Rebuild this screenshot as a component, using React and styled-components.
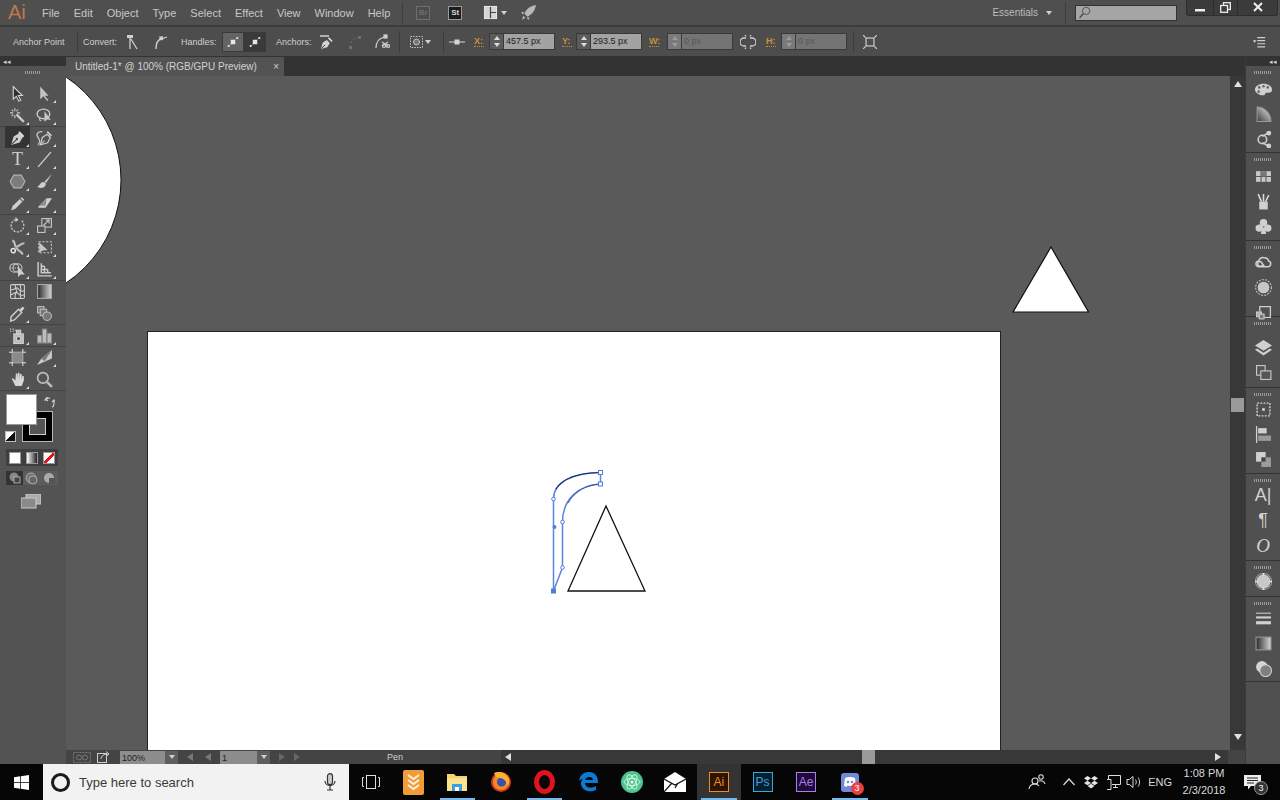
import React from "react";
import styled, { createGlobalStyle } from "styled-components";

const GlobalStyle = createGlobalStyle`
  html, body { margin: 0; padding: 0; background: #000; }
  * { box-sizing: border-box; }
`;

const L = "#c9c9c9";

const NIB = "M2 15l2.4-8 5-3 3.6 3.6-3 5z";

// tool and panel drawings, 16x16
const ICONS = {
  select: <path d="M4 1.5v11.8l2.9-2.7 2.4 4.6 1.8-.9-2.3-4.4h3.8z" fill="#303030" stroke="#d6d6d6" />,
  direct: <path d="M4 1.5v12l3-2.8 3.6 4.3 1-.8-3.4-4.2h3.6z" fill="#c4c4c4" />,
  wand: <g stroke={L} fill="none"><path d="M7 7l7 7" strokeWidth="2.2" /><path d="M5.5 1v3M5.5 7.5v3M1 5.5h3M7.5 5.5h3M2.500 2.500l1.6 1.6M8.500 2.500L7 4M2.500 8.500L4 7" /></g>,
  lasso: <g fill="none" stroke={L}><ellipse cx="7" cy="6.5" rx="6" ry="4.5" strokeWidth="1.3" /><path d="M4 10c-1 1-1 3 1 3" /><path d="M8 4v10l2.4-2.2 3.6.2z" fill="#c8c8c8" stroke="none" /></g>,
  pen: <g><path d={NIB} fill="#cfcfcf" /><path d="M10 2.2l4.4 4.4-1.3 1.3-4.4-4.4z" fill="#e0e0e0" /><path d="M2.5 14.5l4.3-4.3" stroke="#444" /><circle cx="7.4" cy="9.4" r="1.1" fill="#444" /></g>,
  curvature: <g fill="none" stroke={L}><path d="M4 15l2-7 4.500-3 3 3-2.500 5z" strokeWidth="1.2" /><path d="M10.500 2.500l4 4" strokeWidth="1.8" /><path d="M4.500 14.500L8 11" /><path d="M6 2.500C1 2 0 5.500 2 8s2 4 0 7" strokeWidth="1.2" /></g>,
  line: <path d="M2 15L14 1" stroke="#d0d0d0" strokeWidth="1.2" />,
  hexagon: <path d="M4.500 2h7L15 8l-3.500 6h-7L1 8z" fill="#7c7c7c" stroke="#b4b4b4" />,
  brush: <g><path d="M15 1L8 8l1.500 1.500z" fill={L} /><path d="M7.500 8.500C4 8 4 12 1 13c3 2 8 1 8.400-3z" fill="#cfcfcf" /></g>,
  pencil: <g><path d="M12 2l2.400 2.400L6 13l-4 1.500 1.400-4.100z" fill="#cfcfcf" /><path d="M10.500 3.500l2.400 2.400" stroke="#555" /></g>,
  eraser: <g><path d="M10 3h5l-6 9H2l1-2z" fill="#d0d0d0" /><path d="M10 3l-7 7h6z" fill="#8e8e8e" /></g>,
  rotate: <g fill="none" stroke={L}><path d="M12 3.600A6 6 0 1 1 6 2.400" strokeDasharray="2 1.2" strokeWidth="1.2" /><path d="M6 0v5l3-2.500z" fill={L} stroke="none" /></g>,
  scale: <g fill="none" stroke={L}><rect x="5.5" y="1.5" width="9" height="8" /><rect x="1.5" y="8.5" width="7" height="6" fill="#555" /><path d="M7 8l5-5M9 2.800h3.300v3.300" /></g>,
  puppet: <g fill="none" stroke="#bcbcbc" strokeWidth="2"><path d="M3 1.500C6 2 5 5 6 7c3 1.500 4-3 8.500-3" /><path d="M7 8c.5 3 4 2.500 6 6.500" /><circle cx="4" cy="11" r="2" fill="#535353" stroke="#e6e6e6" strokeWidth="1.3" /></g>,
  free: <g><rect x="2.5" y="2.5" width="12" height="10.5" fill="none" stroke={L} strokeDasharray="2 1.5" /><path d="M3 3v10l3-2 2-.5h3z" fill="#c4c4c4" /></g>,
  builder: <g fill="none" stroke={L}><ellipse cx="5" cy="6.500" rx="4.200" ry="4" /><path d="M1 6.500h8" strokeDasharray="1.2 1" /><ellipse cx="8" cy="6.500" rx="4.200" ry="4" /><path d="M8.500 5v10l2.500-2.400 3.800.2z" fill="#cfcfcf" stroke="none" /></g>,
  perspective: <g fill="none" stroke={L}><path d="M2 1v13h13" strokeWidth="1.4" /><path d="M5 2v9h9M8 5v6M11 8v3M5 5h3M5 8h6" strokeWidth="1.4" /></g>,
  mesh: <g fill="none" stroke="#cfcfcf"><rect x="1.5" y="1.5" width="13" height="13" rx="1" /><path d="M1.500 6c3 2 5-3 7-1s1 4 6 2M1.500 11c3 0 4-3 6-2s2 4 7 2M6 1.500c-1 3 2 5 1 7s-2 3-1 6M11 1.500c-1 3 1 4 0 6s0 5 0 7" /></g>,
  gradient: <rect x="1.5" y="1.5" width="13" height="13" fill="url(#toolGrad)" stroke="#aaa" />,
  eyedropper: <g><path d="M13 1.500L14.500 3 12 6l-2-2z" fill="#d0d0d0" /><path d="M9 4l3 3-7 7-3.500 1L2 11z" fill="none" stroke="#cfcfcf" strokeWidth="1.3" /></g>,
  blend: <g fill="#777" stroke="#bdbdbd"><rect x="1.5" y="1.5" width="6" height="6" /><rect x="4" y="4" width="6" height="6" /><circle cx="10.5" cy="10.5" r="4" /></g>,
  spray: <g fill="none" stroke="#cfcfcf"><rect x="4.5" y="6.5" width="9" height="9" fill="#bbb" /><circle cx="9" cy="11" r="2" fill="#555" /><rect x="7" y="3" width="4" height="3.5" fill="#bbb" /><path d="M1 2h1M3.500 2h1M1 4h1M3.500 4h1M5.500 3h1" /></g>,
  graph: <g fill="#bcbcbc" stroke="#8a8a8a"><rect x="1.5" y="8" width="4" height="7" /><rect x="6" y="2" width="4" height="13" /><rect x="10.5" y="6" width="4" height="9" /></g>,
  artboard: <g><rect x="3" y="3" width="10" height="10" fill="#8a8a8a" stroke="#aaa" /><path d="M3 0v3H0M13 0v3h3M3 16v-3H0M13 16v-3h3" fill="none" stroke="#ddd" /></g>,
  slice: <g><path d="M15 1L5 9l-4 6 14-6z" fill="#c8c8c8" /><path d="M15 1L5 9l3 2.500z" fill="#7a7a7a" /></g>,
  hand: <path d="M3 8l3 6h6l2-5V5l-1.500-.5L12 8V3l-1.500-.5L10 7.500V2l-1.500-.5L8 7.500v-5L6.500 2 6 9 3.800 6.800 2.500 7z" fill="#d6d6d6" />,
  zoom: <g fill="none" stroke="#bdbdbd"><circle cx="6.5" cy="6.5" r="5" strokeWidth="1.6" /><path d="M10.500 10.500L15 15" strokeWidth="2.4" /></g>,
  // control bar
  convertA: <g fill="none" stroke="#cfcfcf"><path d="M5 2v13M6 5l6 10" strokeWidth="1.3" /><rect x="2" y="1" width="6" height="3" fill="#cfcfcf" stroke="none" /></g>,
  convertB: <g fill="none" stroke="#cfcfcf" strokeWidth="1.3"><path d="M3 15c0-6 1-9 5-10" /><path d="M8 5l6-2" /><rect x="7" y="3" width="2.5" height="2.5" fill="#ccc" /></g>,
  handles: <g><path d="M2 14L14 2" stroke="#ddd" strokeDasharray="2 1.4" /><rect x="5" y="5" width="6" height="6" fill="#e6e6e6" /><rect x="1" y="12" width="2.5" height="2.5" fill="#ddd" /><rect x="12.5" y="1.5" width="2.5" height="2.5" fill="#ddd" /></g>,
  addAnchor: <g><path d="M2 15l1.800-6.500 4-2.500 3 3-2.500 4.300z" fill="#d2d2d2" /><path d="M9 4.500L12.500 8l1-1.200L10 3.300z" fill="#e0e0e0" /><path d="M1 2h9" stroke="#ddd" strokeWidth="1.4" /><path d="M2.500 14.500L6 11" stroke="#444" /></g>,
  removeAnchor: <g fill="#707070"><rect x="2" y="12" width="3" height="3" /><rect x="11" y="2" width="3" height="3" /><path d="M4 9c.5-3 2-4 5-5" fill="none" stroke="#707070" strokeDasharray="1.5 1.5" /></g>,
  cutPath: <g fill="none" stroke="#cfcfcf" strokeWidth="1.2"><path d="M2 14c0-6 3-10 9-11" /><rect x="10" y="1" width="3" height="3" fill="#ccc" /><circle cx="10" cy="12" r="1.5" /><circle cx="14" cy="12" r="1.5" /><path d="M8 8l6 4M14 8l-6 4" /></g>,
  isolate: <g fill="none" stroke="#c4c4c4"><rect x="1.5" y="2.5" width="12" height="11" strokeDasharray="1.5 1.2" /><circle cx="7.5" cy="8" r="3" fill="#777" /></g>,
  refPoint: <g stroke="#d4d4d4"><path d="M0 8h16" /><rect x="6" y="6" width="4" height="4" fill="#d4d4d4" /></g>,
  link: <g fill="none" stroke="#d0d0d0" strokeWidth="1.3"><path d="M6 4H4a4 4 0 0 0 0 8h2M10 4h2a4 4 0 0 1 0 8h-2" /><path d="M5 1l1 1.500M11 1l-1 1.500M5 15l1-1.500M11 15l-1-1.500" /></g>,
  transformBox: <g fill="none" stroke="#d4d4d4"><rect x="3.5" y="3.5" width="9" height="9" strokeWidth="1.3" /><path d="M0 0l3 3M16 0l-3 3M0 16l3-3M16 16l-3-3" strokeWidth="1.3" /></g>,
  panelMenu: <g stroke="#cfcfcf"><path d="M6 3h9M6 6.500h9M6 10h9M6 13.500h9" strokeWidth="1.3" /><path d="M1 6h4L3 9z" fill="#cfcfcf" stroke="none" /></g>,
  arrange: <g><rect x="1.5" y="1.5" width="13" height="13" fill="#d6d6d6" stroke="#ededed" /><path d="M8 2v12M8 8h6" stroke="#444" strokeWidth="1.3" /></g>,
  rocket: <g fill="#b8b8b8"><path d="M15 1C9 2 6 5 4 9l3 3c4-2 7-5 8-11z" /><path d="M3.500 7L1 8l2 2zM9 12.500L8 15l-2-2zM3 11l2 2-3 2z" /></g>,
  search: <g fill="none" stroke="#444"><circle cx="10" cy="6" r="4.5" /><path d="M6.500 9.500L2 14.500" strokeWidth="1.5" /></g>,
  // dock
  palette: <g><path d="M8 2.500c-4.500 0-8 2.300-8 5.500 0 3 3.500 5.500 8 5.500 2 0 1-2.500 3-2.500s5 .5 5-3c0-3.200-3.500-5.500-8-5.500z" fill="#cfcfcf" /><circle cx="4" cy="6" r="1.2" fill="#666" /><circle cx="8" cy="5" r="1.2" fill="#666" /><circle cx="12" cy="6" r="1.2" fill="#666" /><circle cx="3.5" cy="10" r="1.2" fill="#666" /></g>,
  colorGuide: <path d="M2 1c7 0 13 6 13 13.500H2z" fill="url(#dockGrad)" stroke="#999" />,
  guide: <g fill="none" stroke="#d0d0d0" strokeWidth="1.5"><circle cx="7" cy="8" r="4" /><path d="M7 5l5-3M7 11l5 3" /><circle cx="13" cy="2" r="1.5" fill="#d0d0d0" /><circle cx="13" cy="14" r="1.5" fill="#d0d0d0" /></g>,
  swatches: <g><rect x="1" y="3" width="14" height="10" fill="#c8c8c8" /><path d="M1 8h14M5.700 3v10M10.300 3v10" stroke="#555" /><rect x="5.7" y="3" width="4.6" height="5" fill="#777" /></g>,
  brushes: <g><rect x="4" y="8" width="8" height="7.5" fill="#d0d0d0" /><path d="M6 8L3 1M8 8V1M10 8l3-6" stroke="#d8d8d8" strokeWidth="1.5" /></g>,
  clover: <g fill="#d0d0d0"><circle cx="8" cy="4.5" r="3.5" /><circle cx="4" cy="9.5" r="3.5" /><circle cx="12" cy="9.5" r="3.5" /><path d="M7 9h2l1.500 6h-5z" /></g>,
  cc: <g fill="none" stroke="#d0d0d0" strokeWidth="1.4"><path d="M9 3.500a4 4 0 0 1 3.800 3c2.600.4 3 5.500-.8 5.500H4c-4 0-4-5-.7-5.500A5 5 0 0 1 9 3.500z" /><path d="M9 12L6 7.800C5 6.500 2.500 7.400 2.500 9.500S6 12.500 7.500 10" /></g>,
  appearance: <g><circle cx="8" cy="8" r="5.5" fill="#c6c6c6" /><circle cx="8" cy="8" r="7.4" fill="none" stroke="#c8c8c8" strokeDasharray="1.8 1.2" /></g>,
  styles: <g fill="none" stroke="#cfcfcf"><path d="M4.500 7V2.500h10v10H8" strokeWidth="1.2" /><rect x="1.5" y="7.5" width="4.5" height="4.5" fill="#aaa" /><rect x="4" y="9.5" width="4.5" height="4.5" fill="#777" /></g>,
  layers: <g fill="#d0d0d0"><path d="M8 1l8 5-8 5-8-5z" /><path d="M2 9l6 4 6-4 2 1.200-8 5.300-8-5.300z" /></g>,
  artboards: <g fill="#555" stroke="#cfcfcf"><rect x="1.5" y="1.5" width="8" height="9" /><rect x="5.5" y="6.5" width="9.5" height="8" /></g>,
  transform: <g fill="none" stroke="#cfcfcf"><rect x="2" y="2" width="12" height="12" strokeDasharray="1.8 1.2" strokeWidth="1.4" /><rect x="6.8" y="6.8" width="2.4" height="2.4" fill="#ddd" stroke="none" /></g>,
  align: <g><path d="M1.500 0v16" stroke="#cfcfcf" strokeWidth="1.2" /><rect x="3" y="2" width="8" height="5" fill="#d0d0d0" /><rect x="3" y="9" width="12" height="5" fill="#9a9a9a" /></g>,
  pathfinder: <g><rect x="1" y="1" width="9" height="9" fill="#d0d0d0" /><rect x="6" y="6" width="9" height="9" fill="#9c9c9c" /><rect x="6" y="6" width="4" height="4" fill="#444" /></g>,
  navigator: <g><circle cx="8" cy="8" r="6.5" fill="#c8c8c8" /><circle cx="8" cy="8" r="7.6" fill="none" stroke="#999" /><path d="M8 0v2.500M8 13.500V16M0 8h2.500M13.500 8H16" stroke="#e0e0e0" strokeWidth="1.6" /></g>,
  stroke: <g stroke="#d0d0d0"><path d="M1 3h14" /><path d="M1 7h14" strokeWidth="2" /><path d="M1 12h14" strokeWidth="3" /></g>,
  gradientPanel: <rect x="1" y="2" width="14" height="12" fill="url(#toolGrad)" stroke="#999" />,
  transparency: <g><circle cx="6.5" cy="6.5" r="5.5" fill="#d4d4d4" /><circle cx="10" cy="10" r="5.5" fill="#808080" stroke="#d4d4d4" /></g>,
};

const Icon = ({ name, size = 17 }) => (
  <svg width={size} height={size} viewBox="0 0 16 16">{ICONS[name]}</svg>
);

const TOOL_GROUPS = [
  [["select"], ["direct", 1], ["wand", 1], ["lasso", 1]],
  [["pen", 1, 1], ["curvature", 1], ["T", 1], ["line", 1], ["hexagon", 1], ["brush", 1], ["pencil", 1], ["eraser", 1]],
  [["rotate", 1], ["scale", 1], ["puppet", 1], ["free", 1], ["builder", 1], ["perspective", 1]],
  [["mesh"], ["gradient"], ["eyedropper", 1], ["blend"]],
  [["spray", 1], ["graph", 1]],
  [["artboard"], ["slice", 1], ["hand", 1], ["zoom"]],
];

const DOCK_GROUPS = [
  { h: 87, pad: 3, items: ["palette", "colorGuide", "guide"] },
  { h: 88, pad: 3, items: ["swatches", "brushes", "clover"] },
  { h: 76, pad: 1, items: ["cc", "appearance", "styles"] },
  { h: 71, pad: 10, items: ["layers", "artboards"] },
  { h: 86, pad: 1, items: ["transform", "align", "pathfinder"] },
  { h: 87, pad: 1, items: ["A", "P", "O"] },
  { h: 36, pad: 0, items: ["navigator"] },
  { h: 85, pad: 1, items: ["stroke", "gradientPanel", "transparency"] },
];

const MENUS = ["File", "Edit", "Object", "Type", "Select", "Effect", "View", "Window", "Help"];

const Screen = styled.div`
  width: 1280px;
  height: 800px;
  display: flex;
  flex-direction: column;
  overflow: hidden;
  background: #535353;
  font-family: "Liberation Sans", Arial, sans-serif;
  color: #c4c4c4;
`;

const MenuBar = styled.div`
  height: 27px;
  display: flex;
  align-items: center;
  background: #4f4f4f;
  border-bottom: 2px solid #3c3c3c;
  flex: none;
`;

const Logo = styled.span`
  width: 42px;
  padding-left: 8px;
  font-size: 20px;
  color: #c0784a;
`;

const Menu = styled.span`
  font-size: 11px;
  margin-right: 14px;
  color: #c8c8c8;
`;

const Sep = styled.span`
  width: 1px;
  height: 22px;
  background: #3d3d3d;
  margin-left: ${(p) => p.$ml || 0}px;
  flex: none;
`;

const BridgeBox = styled.span`
  width: 14px;
  height: 14px;
  margin-left: ${(p) => p.$ml}px;
  border: 1px solid ${(p) => (p.$dim ? "#6e6e6e" : "#9a9a9a")};
  background: ${(p) => (p.$dim ? "#4c4c4c" : "#1c1c1c")};
  color: ${(p) => (p.$dim ? "#6e6e6e" : "#d8d8d8")};
  font-size: 8px;
  font-weight: bold;
  display: flex;
  align-items: center;
  justify-content: center;
`;

const Slot = styled.span`
  margin-left: ${(p) => p.$ml || 0}px;
  display: flex;
  align-items: center;
  flex: none;
`;

const Caret = styled.span`
  width: 0;
  height: 0;
  margin-left: ${(p) => p.$ml || 0}px;
  border-left: 3px solid transparent;
  border-right: 3px solid transparent;
  border-top: 4px solid #cfcfcf;
  flex: none;
`;

const Essentials = styled.span`
  margin-left: auto;
  font-size: 10px;
  color: #bdbdbd;
`;

const SearchBox = styled.div`
  width: 102px;
  height: 16px;
  margin-left: 9px;
  padding-left: 2px;
  background: #a5a5a5;
  border: 1px solid #333;
  display: flex;
  align-items: center;
`;

const WindowButtons = styled.div`
  width: 92px;
  height: 17px;
  margin-left: 9px;
  margin-right: 2px;
  margin-top: -10px;
  display: grid;
  grid-template-columns: 27px 24px 1fr;
  background: #3b3b3b;
  border: 1px solid #2e2e2e;
  border-top: 0;
  border-radius: 0 0 3px 3px;
`;

const WindowButton = styled.span`
  display: flex;
  align-items: center;
  justify-content: center;
  border-right: ${(p) => (p.$last ? "0" : "1px solid #2c2c2c")};
`;

const ControlBar = styled.div`
  height: 30px;
  display: flex;
  align-items: center;
  background: #4d4d4d;
  border-bottom: 1px solid #333;
  flex: none;
`;

const CtrlLabel = styled.span`
  width: ${(p) => p.$w}px;
  margin-left: ${(p) => p.$ml || 0}px;
  font-size: 9px;
  color: #cfcfcf;
  white-space: nowrap;
  flex: none;
`;

const HandleButton = styled.span`
  width: 22px;
  height: 20px;
  margin-left: ${(p) => p.$ml || 0}px;
  display: flex;
  align-items: center;
  justify-content: center;
  background: ${(p) => (p.$on ? "#646464" : "#3a3a3a")};
  border: 1px solid #3a3a3a;
  flex: none;
`;

const AxisLabel = styled.span`
  width: 10px;
  margin-left: ${(p) => p.$ml}px;
  font-size: 9px;
  font-weight: bold;
  color: #c98f3c;
  border-bottom: 1px dotted #c98f3c;
  flex: none;
`;

const Stepper = styled.span`
  width: 15px;
  height: 17px;
  margin-left: ${(p) => p.$ml}px;
  background: ${(p) => (p.$off ? "#7a7a7a" : "#5b5b5b")};
  border: 1px solid #393939;
  display: flex;
  flex-direction: column;
  align-items: center;
  justify-content: space-around;
  flex: none;
`;

const StepArrow = styled.span`
  width: 0;
  height: 0;
  border-left: 3px solid transparent;
  border-right: 3px solid transparent;
  border-${(p) => (p.$down ? "top" : "bottom")}: 4px solid ${(p) => (p.$off ? "#9a9a9a" : "#dcdcdc")};
`;

const ValueInput = styled.span`
  width: 51px;
  height: 17px;
  padding-left: 2px;
  font-size: 9px;
  line-height: 15px;
  color: ${(p) => (p.$off ? "#575757" : "#222")};
  background: ${(p) => (p.$off ? "#747474" : "#a3a3a3")};
  border: 1px solid #393939;
  border-left: 0;
  flex: none;
`;

const Workspace = styled.div`
  flex: 1;
  min-height: 0;
  display: flex;
`;

const LeftPanel = styled.div`
  width: 66px;
  flex: none;
  display: flex;
  flex-direction: column;
  background: #535353;
`;

const CollapseStrip = styled.div`
  height: 9px;
  display: flex;
  align-items: center;
  justify-content: ${(p) => (p.$right ? "flex-end" : "flex-start")};
  padding: 0 3px;
  font-size: 7px;
  line-height: 9px;
  color: #cfcfcf;
  background: #333;
  flex: none;
`;

const Grip = styled.div`
  width: ${(p) => p.$w || 16}px;
  height: 3px;
  margin: 5px auto 0;
  background: repeating-linear-gradient(90deg, #9a9a9a 0 1px, transparent 1px 2px);
  flex: none;
`;

const ToolGroup = styled.div`
  display: grid;
  grid-template-columns: 27px 27px;
  grid-auto-rows: 22px;
  justify-content: start;
  padding-left: 5px;
  padding-top: ${(p) => p.$pt || 0}px;
  box-shadow: 0 1px 0 #434343;
  flex: none;
`;

const Tool = styled.div`
  position: relative;
  display: flex;
  align-items: center;
  justify-content: center;
  width: 25px;
  background: ${(p) => (p.$active ? "#343434" : "transparent")};
  font-family: "Liberation Serif", serif;
  font-size: 18px;
  color: #d0d0d0;
  ${(p) =>
    p.$corner &&
    `&::after {
      content: "";
      position: absolute;
      right: 1px;
      bottom: 1px;
      border-left: 3px solid transparent;
      border-bottom: 3px solid #d8d8d8;
    }`}
`;

const FillStroke = styled.div`
  position: relative;
  height: 50px;
  margin-top: 4px;
  flex: none;
`;

const FillSwatch = styled.div`
  position: absolute;
  left: 6px;
  top: 0;
  width: 31px;
  height: 31px;
  background: #fff;
  border: 1px solid #9a9a9a;
  z-index: 2;
`;

const StrokeSwatch = styled.div`
  position: absolute;
  left: 22px;
  top: 17px;
  width: 31px;
  height: 31px;
  background: #000;
  border: 1px solid #b5b5b5;
  display: flex;
  align-items: center;
  justify-content: center;
  &::after {
    content: "";
    width: 15px;
    height: 15px;
    background: #555;
    border: 1px solid #cfcfcf;
  }
`;

const SwapIcon = styled.span`
  position: absolute;
  left: 44px;
  top: 0;
`;

const DefaultIcon = styled.span`
  position: absolute;
  left: 5px;
  top: 37px;
  width: 11px;
  height: 11px;
  background: linear-gradient(135deg, #fff 0 45%, #111 45%);
  border: 1px solid #bbb;
`;

const ModeRow = styled.div`
  height: ${(p) => p.$h}px;
  margin: 5px 8px 0 6px;
  display: flex;
  align-items: center;
  justify-content: space-around;
  background: ${(p) => p.$bg || "#3f3f3f"};
  flex: none;
`;

const ColorMode = styled.span`
  width: 12px;
  height: 12px;
  border: 1px solid #999;
  background: ${(p) => p.$fill};
`;

const DrawMode = styled.span`
  flex: 1;
  height: 100%;
  display: flex;
  align-items: center;
  justify-content: center;
  background: ${(p) => (p.$on ? "#333" : "#5c5c5c")};
`;

const ScreenMode = styled.div`
  margin-top: 9px;
  padding-left: 21px;
  flex: none;
`;

const Center = styled.div`
  flex: 1;
  min-width: 0;
  display: flex;
  flex-direction: column;
`;

const TabBar = styled.div`
  height: 19px;
  display: flex;
  background: #333;
  flex: none;
`;

const Tab = styled.div`
  width: 218px;
  display: flex;
  align-items: center;
  justify-content: space-between;
  padding: 0 5px 0 9px;
  font-size: 10px;
  color: #d2d2d2;
  background: #535353;
`;

const CanvasRow = styled.div`
  flex: 1;
  min-height: 0;
  display: flex;
`;

const Canvas = styled.div`
  width: 1164px;
  background: #5a5a5a;
  flex: none;
  overflow: hidden;
  svg { display: block; }
`;

const VScroll = styled.div`
  width: 15px;
  display: flex;
  flex-direction: column;
  align-items: center;
  background: #383838;
  flex: none;
`;

const Arrow = styled.span`
  width: 0;
  height: 0;
  flex: none;
  ${(p) => {
    const c = p.$c || "#e0e0e0";
    const s = "border-left: 4px solid transparent; border-right: 4px solid transparent;";
    const h = "border-top: 4px solid transparent; border-bottom: 4px solid transparent;";
    if (p.$dir === "up") return `${s} border-bottom: 6px solid ${c};`;
    if (p.$dir === "down") return `${s} border-top: 6px solid ${c};`;
    if (p.$dir === "left") return `${h} border-right: 6px solid ${c};`;
    return `${h} border-left: 6px solid ${c};`;
  }}
  margin: ${(p) => p.$m || 0};
`;

const ScrollThumb = styled.span`
  width: 13px;
  height: 14px;
  margin-top: ${(p) => p.$mt || 0}px;
  margin-left: ${(p) => p.$ml || 0}px;
  background: #9a9a9a;
  flex: none;
`;

const StatusBar = styled.div`
  height: 14px;
  display: flex;
  align-items: center;
  background: #444;
  flex: none;
`;

const StatusInput = styled.span`
  width: ${(p) => p.$w}px;
  height: 13px;
  margin-left: ${(p) => p.$ml}px;
  padding-left: 2px;
  font-size: 9px;
  line-height: 14px;
  color: #222;
  background: #8d8d8d;
  flex: none;
`;

const StatusDrop = styled.span`
  width: 13px;
  height: 13px;
  display: flex;
  align-items: center;
  justify-content: center;
  background: #5e5e5e;
  flex: none;
`;

const PenLabel = styled.div`
  width: 192px;
  height: 14px;
  margin-left: 6px;
  display: flex;
  align-items: center;
  font-size: 9px;
  color: #cfcfcf;
  padding-left: 81px;
  flex: none;
`;

const HScroll = styled.div`
  width: 727px;
  height: 14px;
  margin-left: 3px;
  display: flex;
  align-items: center;
  background: #383838;
  flex: none;
`;

const RightDock = styled.div`
  width: 35px;
  flex: none;
  display: flex;
  flex-direction: column;
  background: #505050;
  border-left: 1px solid #3a3a3a;
`;

const DockGroup = styled.div`
  height: ${(p) => p.$h}px;
  display: flex;
  flex-direction: column;
  align-items: center;
  border-bottom: 1px solid #333;
  flex: none;
`;

const DockStack = styled.div`
  margin-top: ${(p) => p.$pad}px;
  flex: none;
`;

const DockItem = styled.div`
  height: 25px;
  display: flex;
  align-items: center;
  justify-content: center;
  color: #d0d0d0;
  font-family: ${(p) => (p.$serif ? '"Liberation Serif", serif' : '"Liberation Sans", sans-serif')};
  font-style: ${(p) => (p.$italic ? "italic" : "normal")};
  font-size: ${(p) => p.$size || 16}px;
`;

const Taskbar = styled.div`
  height: 36px;
  display: flex;
  align-items: center;
  background: #060606;
  flex: none;
`;

const StartButton = styled.div`
  width: 43px;
  display: flex;
  justify-content: center;
  flex: none;
`;

const SearchBar = styled.div`
  width: 306px;
  height: 36px;
  display: flex;
  align-items: center;
  padding: 0 13px 0 8px;
  background: #f2f2f2;
  font-size: 13px;
  color: #3a3a3a;
  white-space: nowrap;
  flex: none;
`;

const Cortana = styled.span`
  width: 19px;
  height: 19px;
  margin-right: 9px;
  border: 3px solid #1a1a1a;
  border-radius: 50%;
  flex: none;
`;

const MicSlot = styled.span`
  margin-left: auto;
  display: flex;
`;

const TaskItem = styled.div`
  position: relative;
  width: ${(p) => p.$w || 43.6}px;
  height: 36px;
  display: flex;
  align-items: center;
  justify-content: center;
  background: ${(p) => (p.$active ? "#333" : "transparent")};
  flex: none;
  ${(p) =>
    p.$open &&
    `&::after {
      content: "";
      position: absolute;
      left: 4px;
      right: 4px;
      bottom: 0;
      height: 2px;
      background: #76b9ed;
    }`}
`;

const AppTile = styled.span`
  width: 20px;
  height: 20px;
  display: flex;
  align-items: center;
  justify-content: center;
  font-size: 12px;
  color: ${(p) => p.$c};
  background: ${(p) => p.$bg};
  border: 1px solid ${(p) => p.$c};
`;

const Badge = styled.span`
  position: absolute;
  right: 8px;
  bottom: 5px;
  width: 13px;
  height: 13px;
  border-radius: 50%;
  background: #e8403f;
  color: #fff;
  font-size: 9px;
  line-height: 13px;
  text-align: center;
`;

const Tray = styled.div`
  margin-left: auto;
  display: flex;
  align-items: center;
  color: #d8d8d8;
  flex: none;
`;

const TrayLabel = styled.span`
  margin-left: ${(p) => p.$ml || 0}px;
  font-size: 11px;
`;

const Clock = styled.div`
  width: 58px;
  margin-left: 3px;
  font-size: 11px;
  line-height: 17px;
  text-align: center;
`;

const NotifyBox = styled.div`
  position: relative;
  width: 35px;
  margin-left: 11px;
  margin-right: 1px;
  display: flex;
`;

const NotifyCount = styled.span`
  position: absolute;
  left: 10px;
  top: 6px;
  width: 14px;
  height: 14px;
  border-radius: 50%;
  background: #333;
  border: 1px solid #999;
  color: #fff;
  font-size: 9px;
  line-height: 12px;
  text-align: center;
`;

const Defs = () => (
  <svg width="0" height="0" style={{ position: "absolute" }}>
    <defs>
      <linearGradient id="toolGrad" x1="0" x2="1" y1="0" y2="0">
        <stop offset="0" stopColor="#2a2a2a" />
        <stop offset="1" stopColor="#d8d8d8" />
      </linearGradient>
      <linearGradient id="dockGrad" x1="1" x2="0" y1="0" y2="1">
        <stop offset="0" stopColor="#efefef" />
        <stop offset="1" stopColor="#3a3a3a" />
      </linearGradient>
    </defs>
  </svg>
);

const Stepped = ({ ml, value, off }) => (
  <>
    <Stepper $ml={ml} $off={off}>
      <StepArrow $off={off} />
      <StepArrow $down $off={off} />
    </Stepper>
    <ValueInput $off={off}>{value}</ValueInput>
  </>
);

const Anchor = ({ x, y, solid }) => (
  <rect x={x - 2} y={y - 2} width="4" height="4" fill={solid ? "#4f7fd8" : "#fff"} stroke="#4f7fd8" />
);

const Artwork = () => (
  <svg width="1164" height="674" viewBox="66 76 1164 674">
    <circle cx="-3" cy="180" r="124" fill="#fff" stroke="#111" />
    <path d="M1051 247L1088.5 312H1013z" fill="#fff" stroke="#111" strokeWidth="1.2" />
    <rect x="147.5" y="331.5" width="853" height="430" fill="#fff" stroke="#222" />
    <path d="M606 506L645 591H568z" fill="none" stroke="#111" strokeWidth="1.3" />
    <path
      d="M553.5 591V499C553.5 482 572 473 600.5 472.5V484C578 485 562.5 500 562.5 522V567.5z"
      fill="none"
      stroke="#5a86dc"
      strokeWidth="1.5"
    />
    <path d="M556 489C563 478 580 473 600 472.5" fill="none" stroke="#1c2f60" strokeWidth="1.2" />
    <path d="M568 503C575 491 586 485 600 484" fill="none" stroke="#3d5a9c" />
    <Anchor x={600.5} y={472.5} />
    <Anchor x={600.5} y={484} />
    <circle cx="553.5" cy="499" r="1.8" fill="#fff" stroke="#4f7fd8" />
    <circle cx="554.5" cy="527" r="2" fill="#4f7fd8" />
    <circle cx="562.5" cy="522" r="1.8" fill="#fff" stroke="#4f7fd8" />
    <circle cx="562.5" cy="567.5" r="1.8" fill="#fff" stroke="#4f7fd8" />
    <Anchor x={553.5} y={591} solid />
  </svg>
);

const WinLogo = () => (
  <svg width="15" height="15" viewBox="0 0 16 16" fill="#fff">
    <path d="M0 2.300l6.500-.9v6.200H0zM7.300 1.300L16 0v7.600H7.300zM0 8.400h6.500v6.200L0 13.700zM7.300 8.400H16V16l-8.700-1.300z" />
  </svg>
);

const TaskIcons = {
  view: (
    <svg width="20" height="16" viewBox="0 0 20 16" fill="none" stroke="#ddd">
      <rect x="5.5" y="1.5" width="9" height="13" />
      <path d="M3 3.500H1.500v9H3M17 3.500h1.500v9H17" />
    </svg>
  ),
  sublime: (
    <svg width="21" height="25" viewBox="0 0 21 25">
      <rect width="21" height="25" rx="2" fill="#f29b39" />
      <path d="M5 5l5.500 4L16 5M5 10l5.500 4L16 10M5 15l5.500 4L16 15" fill="none" stroke="#fff3dc" strokeWidth="2" />
    </svg>
  ),
  folder: (
    <svg width="20" height="20" viewBox="0 0 20 20">
      <path d="M0 2h7l2 2h11v15H0z" fill="#f5d26c" />
      <path d="M0 6h20v13H0z" fill="#fbe28f" />
      <rect x="5" y="12" width="10" height="7" fill="#3f9fdc" />
      <rect x="8" y="15" width="4" height="4" fill="#fff" />
    </svg>
  ),
  firefox: (
    <svg width="22" height="22" viewBox="0 0 22 22">
      <circle cx="11" cy="11" r="10" fill="#d6392c" />
      <circle cx="11" cy="11" r="8" fill="#f58a1f" />
      <circle cx="11.5" cy="11" r="4.5" fill="#3a4fb0" />
      <path d="M4 2c3-2 12-2 15 6 1 3 0 5-1 7-1-5-5-8-8-8S5 5 4 2z" fill="#fbb52b" />
    </svg>
  ),
  opera: (
    <svg width="21" height="24" viewBox="0 0 21 24">
      <ellipse cx="10.5" cy="12" rx="8" ry="9.5" fill="none" stroke="#e0131f" strokeWidth="5" />
    </svg>
  ),
  edge: (
    <svg width="20" height="20" viewBox="0 0 20 20">
      <path d="M1 9C2 3 6 0 11 0c6 0 9 4 9 11H7c0 5 7 6 11 3v4c-6 3-15 1-15-7 0-2 1-3 2-4-2 0-3 1-4 2zm6-1h8c0-4-7-4-8 0z" fill="#0c7bd6" />
    </svg>
  ),
  atom: (
    <svg width="22" height="22" viewBox="0 0 22 22">
      <circle cx="11" cy="11" r="11" fill="#4fc48e" />
      <g fill="none" stroke="#c9f3df">
        <ellipse cx="11" cy="11" rx="8" ry="3.5" />
        <ellipse cx="11" cy="11" rx="8" ry="3.5" transform="rotate(60 11 11)" />
        <ellipse cx="11" cy="11" rx="8" ry="3.5" transform="rotate(120 11 11)" />
      </g>
      <circle cx="11" cy="11" r="1.5" fill="#fff" />
    </svg>
  ),
  mail: (
    <svg width="22" height="20" viewBox="0 0 22 20">
      <path d="M0 7L11 0l11 7v13H0z" fill="#fff" />
      <path d="M0 7l11 6 11-6M8 11l-8 9M14 11l-3 5" fill="none" stroke="#111" strokeWidth="1.2" />
    </svg>
  ),
  discord: (
    <svg width="18" height="19" viewBox="0 0 18 19">
      <rect width="18" height="19" rx="3" fill="#7289da" />
      <path d="M4 5c3-1.500 7-1.500 10 0l1 8-2.500 1-1-1.500c-2 .5-3 .5-5 0l-1 1.500L3 13z" fill="#fff" />
      <circle cx="7" cy="9" r="1.3" fill="#7289da" />
      <circle cx="11" cy="9" r="1.3" fill="#7289da" />
    </svg>
  ),
  people: (
    <svg width="18" height="18" viewBox="0 0 18 18" fill="none" stroke="#ddd" strokeWidth="1.1">
      <circle cx="7" cy="8" r="3" />
      <path d="M1 16c.5-3 2.500-5 6-5 1.500 0 3 .5 4 2" />
      <circle cx="13" cy="4" r="2.2" />
      <path d="M11 8c2-.5 5 0 6 3" />
    </svg>
  ),
  chevron: (
    <svg width="14" height="10" viewBox="0 0 14 10" fill="none" stroke="#ddd" strokeWidth="1.2">
      <path d="M1.500 8L7 2l5.500 6" />
    </svg>
  ),
  dropbox: (
    <svg width="14" height="13" viewBox="0 0 14 13" fill="#e4e4e4">
      <path d="M3.500 0L7 2.300 3.500 4.700 0 2.300zM10.500 0L14 2.300l-3.500 2.400L7 2.300zM3.500 4.700L7 7 3.500 9.300 0 7zM10.500 4.700L14 7l-3.500 2.300L7 7zM3.600 10L7 7.800l3.400 2.200L7 12.500z" />
    </svg>
  ),
  network: (
    <svg width="16" height="16" viewBox="0 0 16 16" fill="none" stroke="#ddd">
      <path d="M3.500 5V1.500h12v9H7M2 5.500h4v10H2M8 13.500h5M10.500 10.500v3" />
    </svg>
  ),
  volume: (
    <svg width="16" height="14" viewBox="0 0 16 14" fill="none" stroke="#ddd">
      <path d="M1 4.500h2.500L7 1.500v11l-3.500-3H1z" />
      <path d="M9.500 4.500c1 1.500 1 3.500 0 5M12 2.500c2 2.500 2 6.500 0 9" />
    </svg>
  ),
  note: (
    <svg width="17" height="15" viewBox="0 0 17 15">
      <path d="M0 0h17v11H7l-3 3.500V11H0z" fill="#eee" />
      <path d="M3 3h11M3 5.500h11M3 8h7" stroke="#222" />
    </svg>
  ),
};

export default function App() {
  return (
    <Screen>
      <GlobalStyle />
      <Defs />
      <MenuBar>
        <Logo>Ai</Logo>
        {MENUS.map((m) => (
          <Menu key={m}>{m}</Menu>
        ))}
        <Sep $ml={-2} />
        <BridgeBox $ml={13} $dim>Br</BridgeBox>
        <BridgeBox $ml={18}>St</BridgeBox>
        <Slot $ml={21}><Icon name="arrange" size={15} /></Slot>
        <Caret $ml={3} />
        <Slot $ml={13}><Icon name="rocket" /></Slot>
        <Essentials>Essentials</Essentials>
        <Caret $ml={8} />
        <Sep $ml={13} />
        <SearchBox><Icon name="search" size={13} /></SearchBox>
        <WindowButtons>
          <WindowButton>
            <svg width="10" height="10" viewBox="0 0 10 10"><rect y="7" width="10" height="2.5" fill="#eee" /></svg>
          </WindowButton>
          <WindowButton>
            <svg width="11" height="11" viewBox="0 0 11 11" fill="none" stroke="#eee" strokeWidth="1.3"><rect x="3.5" y=".7" width="6.8" height="6.8" /><rect x=".7" y="3.5" width="6.8" height="6.8" fill="#3b3b3b" /></svg>
          </WindowButton>
          <WindowButton $last>
            <svg width="10" height="10" viewBox="0 0 10 10" stroke="#eee" strokeWidth="2"><path d="M1 1l8 8M9 1L1 9" /></svg>
          </WindowButton>
        </WindowButtons>
      </MenuBar>

      <ControlBar>
        <CtrlLabel $ml={13} $w={50}>Anchor Point</CtrlLabel>
        <Sep $ml={14} />
        <CtrlLabel $ml={5} $w={34}>Convert:</CtrlLabel>
        <Slot $ml={8}><Icon name="convertA" size={16} /></Slot>
        <Slot $ml={12}><Icon name="convertB" size={16} /></Slot>
        <CtrlLabel $ml={12} $w={35}>Handles:</CtrlLabel>
        <HandleButton $ml={6} $on><Icon name="handles" size={12} /></HandleButton>
        <HandleButton><Icon name="handles" size={12} /></HandleButton>
        <CtrlLabel $ml={10} $w={34}>Anchors:</CtrlLabel>
        <Slot $ml={9}><Icon name="addAnchor" size={16} /></Slot>
        <Slot $ml={12}><Icon name="removeAnchor" size={16} /></Slot>
        <Slot $ml={11}><Icon name="cutPath" size={16} /></Slot>
        <Sep $ml={9} />
        <Slot $ml={9}><Icon name="isolate" size={16} /></Slot>
        <Caret $ml={0} />
        <Sep $ml={12} />
        <Slot $ml={5}><Icon name="refPoint" size={16} /></Slot>
        <AxisLabel $ml={9}>X:</AxisLabel>
        <Stepped ml={5} value="457.5 px" />
        <AxisLabel $ml={7}>Y:</AxisLabel>
        <Stepped ml={4} value="293.5 px" />
        <AxisLabel $ml={7}>W:</AxisLabel>
        <Stepped ml={8} value="0 px" off />
        <Slot $ml={7}><Icon name="link" size={16} /></Slot>
        <AxisLabel $ml={10}>H:</AxisLabel>
        <Stepped ml={5} value="0 px" off />
        <Sep $ml={6} />
        <Slot $ml={9}><Icon name="transformBox" size={14} /></Slot>
        <Slot $ml={375}><Icon name="panelMenu" size={14} /></Slot>
      </ControlBar>

      <Workspace>
        <LeftPanel>
          <CollapseStrip>◂◂</CollapseStrip>
          <Grip />
          {TOOL_GROUPS.map((group, i) => (
            <ToolGroup key={i} $pt={i === 0 ? 8 : 0}>
              {group.map(([name, corner, active]) => (
                <Tool key={name} $corner={corner} $active={active}>
                  {name === "T" ? "T" : <Icon name={name} />}
                </Tool>
              ))}
            </ToolGroup>
          ))}
          <FillStroke>
            <FillSwatch />
            <StrokeSwatch />
            <SwapIcon>
              <svg width="11" height="11" viewBox="0 0 11 11" fill="none" stroke="#d0d0d0" strokeWidth="1.2">
                <path d="M1 4c0-2 2-3 5-3M8 10c2 0 2-3 2-5M4 0L1.500 2 4 4M8 5l2-2 1 2" />
              </svg>
            </SwapIcon>
            <DefaultIcon />
          </FillStroke>
          <ModeRow $h={17}>
            <ColorMode $fill="#fff" />
            <ColorMode $fill="linear-gradient(90deg,#fff,#222)" />
            <ColorMode $fill="linear-gradient(135deg,#fff 0 40%,#e11 40% 60%,#fff 60%)" />
          </ModeRow>
          <ModeRow $h={14} $bg="#5c5c5c">
            <DrawMode $on>
              <svg width="12" height="12" viewBox="0 0 12 12"><circle cx="5" cy="5" r="4.5" fill="#888" /><rect x="5" y="5" width="6" height="6" fill="#444" stroke="#aaa" /></svg>
            </DrawMode>
            <DrawMode>
              <svg width="13" height="13" viewBox="0 0 13 13"><circle cx="6" cy="6" r="5" fill="#777" stroke="#aaa" /><circle cx="8" cy="8" r="4" fill="#666" stroke="#aaa" /></svg>
            </DrawMode>
            <DrawMode>
              <svg width="12" height="12" viewBox="0 0 12 12"><circle cx="6" cy="6" r="5" fill="#aaa" /><rect x="6" y="6" width="6" height="6" fill="#555" /></svg>
            </DrawMode>
          </ModeRow>
          <ScreenMode>
            <svg width="20" height="15" viewBox="0 0 20 15"><rect x="5" y="0" width="15" height="10" fill="#aaa" stroke="#ccc" /><rect x="0" y="4" width="15" height="10" fill="#8a8a8a" stroke="#ccc" /></svg>
          </ScreenMode>
        </LeftPanel>

        <Center>
          <TabBar>
            <Tab>
              <span>Untitled-1* @ 100% (RGB/GPU Preview)</span>
              <span>×</span>
            </Tab>
          </TabBar>
          <CanvasRow>
            <Canvas><Artwork /></Canvas>
            <VScroll>
              <Arrow $dir="up" $m="5px 0 0" />
              <ScrollThumb $mt={311} />
              <Arrow $dir="down" $m="322px 0 0" />
            </VScroll>
          </CanvasRow>
          <StatusBar>
            <Slot $ml={7}>
              <svg width="18" height="11" viewBox="0 0 18 11" fill="none" stroke="#777"><rect x=".5" y=".5" width="17" height="10" strokeDasharray="2 1" /><circle cx="6" cy="5.5" r="2.5" /><circle cx="12" cy="5.5" r="2.5" /></svg>
            </Slot>
            <Slot $ml={6}>
              <svg width="13" height="12" viewBox="0 0 13 12" fill="none" stroke="#cfcfcf"><rect x=".5" y="2.5" width="9" height="9" /><path d="M4 8c0-3 3-5 7-5M9 .5L12 3 9 5.500" /></svg>
            </Slot>
            <StatusInput $ml={10} $w={45}>100%</StatusInput>
            <StatusDrop><Caret /></StatusDrop>
            <Arrow $dir="left" $c="#777" $m="0 0 0 9px" />
            <Arrow $dir="left" $c="#777" $m="0 0 0 12px" />
            <StatusInput $ml={9} $w={37}>1</StatusInput>
            <StatusDrop><Caret /></StatusDrop>
            <Arrow $dir="right" $c="#666" $m="0 0 0 9px" />
            <Arrow $dir="right" $c="#666" $m="0 0 0 9px" />
            <PenLabel>Pen</PenLabel>
            <HScroll>
              <Arrow $dir="left" $m="0 0 0 4px" />
              <ScrollThumb $ml={351} />
              <Arrow $dir="right" $m="0 0 0 340px" />
            </HScroll>
          </StatusBar>
        </Center>

        <RightDock>
          <CollapseStrip $right>◂◂</CollapseStrip>
          {DOCK_GROUPS.map((g, i) => (
            <DockGroup key={i} $h={g.h}>
              <Grip $w={18} />
              <DockStack $pad={g.pad}>
                {g.items.map((name) => {
                  if (name === "A") return <DockItem key={name} $size={18}>A|</DockItem>;
                  if (name === "P") return <DockItem key={name} $size={18}>¶</DockItem>;
                  if (name === "O") return <DockItem key={name} $serif $italic $size={19}>O</DockItem>;
                  return <DockItem key={name}><Icon name={name} /></DockItem>;
                })}
              </DockStack>
            </DockGroup>
          ))}
        </RightDock>
      </Workspace>

      <Taskbar>
        <StartButton><WinLogo /></StartButton>
        <SearchBar>
          <Cortana />
          <span>Type here to search</span>
          <MicSlot>
            <svg width="12" height="18" viewBox="0 0 12 18" fill="none" stroke="#333" strokeWidth="1.2"><rect x="3.5" y=".7" width="5" height="11" rx="2.5" fill="#ccc" /><path d="M1 8c0 6 10 6 10 0M6 13v4M3 17h6" /></svg>
          </MicSlot>
        </SearchBar>
        <TaskItem $w={43}>{TaskIcons.view}</TaskItem>
        <TaskItem>{TaskIcons.sublime}</TaskItem>
        <TaskItem $open>{TaskIcons.folder}</TaskItem>
        <TaskItem>{TaskIcons.firefox}</TaskItem>
        <TaskItem $open>{TaskIcons.opera}</TaskItem>
        <TaskItem>{TaskIcons.edge}</TaskItem>
        <TaskItem>{TaskIcons.atom}</TaskItem>
        <TaskItem>{TaskIcons.mail}</TaskItem>
        <TaskItem $active $open><AppTile $c="#f08a24" $bg="#2b1503">Ai</AppTile></TaskItem>
        <TaskItem><AppTile $c="#3aa6dd" $bg="#061e2e">Ps</AppTile></TaskItem>
        <TaskItem><AppTile $c="#a97fe8" $bg="#1e0b3a">Ae</AppTile></TaskItem>
        <TaskItem $open>{TaskIcons.discord}<Badge>3</Badge></TaskItem>
        <Tray>
          {TaskIcons.people}
          <Slot $ml={16}>{TaskIcons.chevron}</Slot>
          <Slot $ml={8}>{TaskIcons.dropbox}</Slot>
          <Slot $ml={7}>{TaskIcons.network}</Slot>
          <Slot $ml={5}>{TaskIcons.volume}</Slot>
          <TrayLabel $ml={6}>ENG</TrayLabel>
          <Clock>1:08 PM<br />2/3/2018</Clock>
          <NotifyBox>
            {TaskIcons.note}
            <NotifyCount>3</NotifyCount>
          </NotifyBox>
        </Tray>
      </Taskbar>
    </Screen>
  );
}
